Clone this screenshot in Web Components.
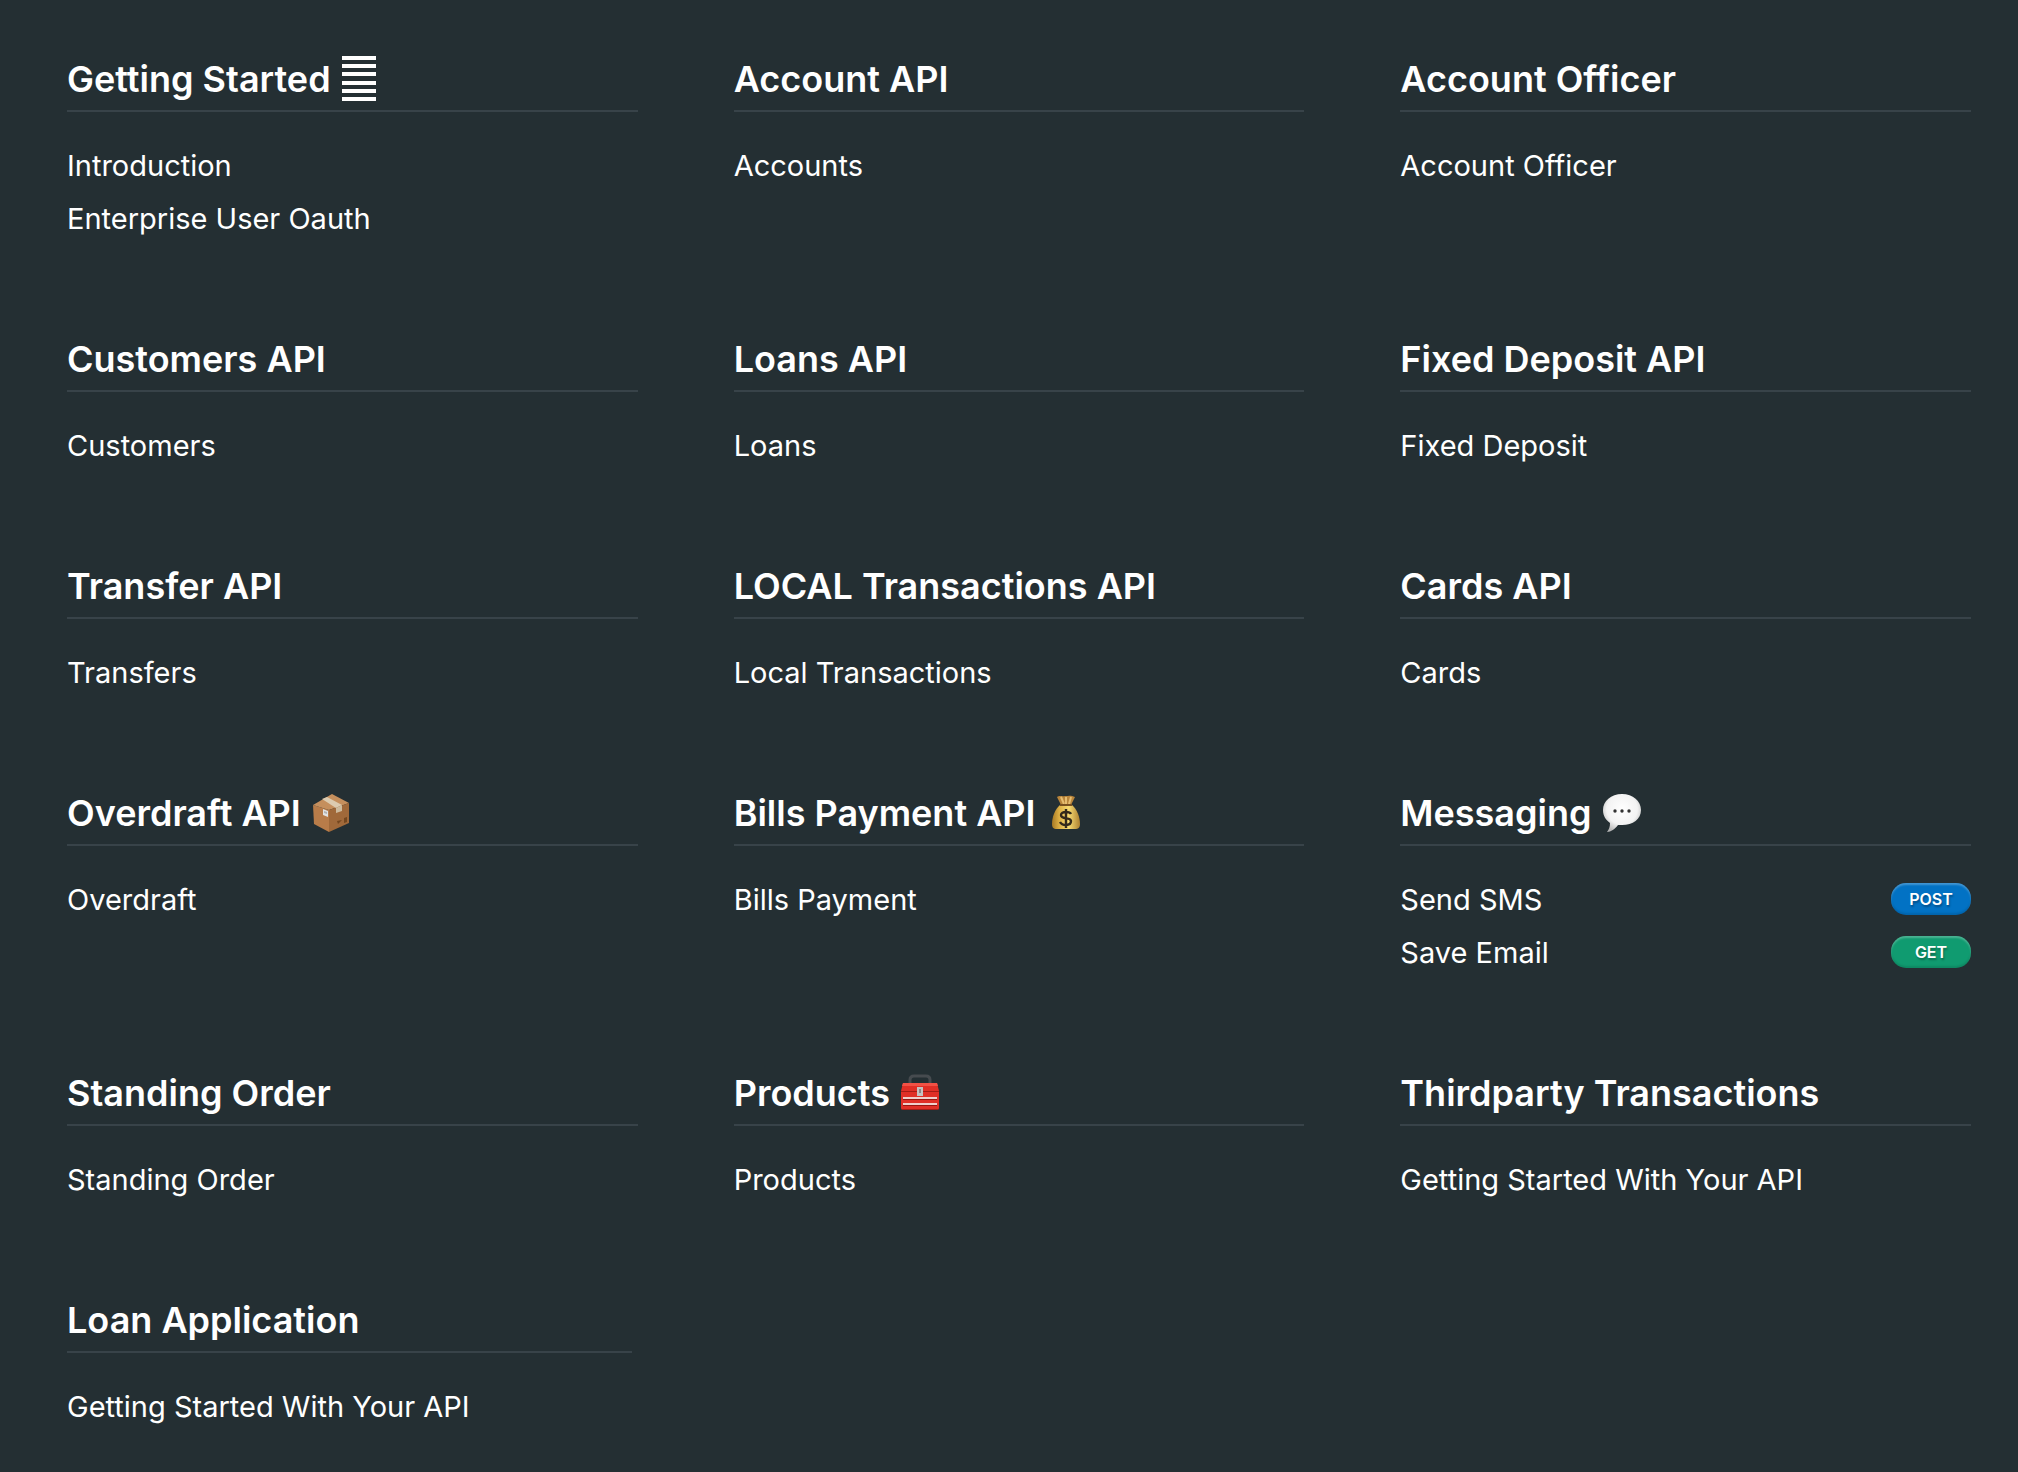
<!DOCTYPE html>
<html lang="en">
<head>
<meta charset="utf-8">
<meta name="viewport" content="width=device-width, initial-scale=1">
<title>API Reference</title>
<style>
  body { margin: 0; background: #242f33; color: #fff; font-family: Inter, "Noto Sans", sans-serif; }
</style>
</head>
<body>
<api-index>
  <api-section heading="Getting Started">
    <emoji-icon slot="icon" name="lines"></emoji-icon>
    <api-link>Introduction</api-link>
    <api-link>Enterprise User Oauth</api-link>
  </api-section>
  <api-section heading="Account API"><api-link>Accounts</api-link></api-section>
  <api-section heading="Account Officer"><api-link>Account Officer</api-link></api-section>
  <api-section heading="Customers API"><api-link>Customers</api-link></api-section>
  <api-section heading="Loans API"><api-link>Loans</api-link></api-section>
  <api-section heading="Fixed Deposit API"><api-link>Fixed Deposit</api-link></api-section>
  <api-section heading="Transfer API"><api-link>Transfers</api-link></api-section>
  <api-section heading="LOCAL Transactions API"><api-link>Local Transactions</api-link></api-section>
  <api-section heading="Cards API"><api-link>Cards</api-link></api-section>
  <api-section heading="Overdraft API">
    <emoji-icon slot="icon" name="package"></emoji-icon>
    <api-link>Overdraft</api-link>
  </api-section>
  <api-section heading="Bills Payment API">
    <emoji-icon slot="icon" name="money"></emoji-icon>
    <api-link>Bills Payment</api-link>
  </api-section>
  <api-section heading="Messaging">
    <emoji-icon slot="icon" name="speech"></emoji-icon>
    <api-link method="POST">Send SMS</api-link>
    <api-link method="GET">Save Email</api-link>
  </api-section>
  <api-section heading="Standing Order"><api-link>Standing Order</api-link></api-section>
  <api-section heading="Products">
    <emoji-icon slot="icon" name="toolbox"></emoji-icon>
    <api-link>Products</api-link>
  </api-section>
  <api-section heading="Thirdparty Transactions"><api-link>Getting Started With Your API</api-link></api-section>
  <api-section heading="Loan Application" narrow><api-link>Getting Started With Your API</api-link></api-section>
</api-index>

<script>
const icons = {
  lines: `<svg width="34" height="46" viewBox="0 0 34 46" fill="#fff"><path d="M0 0h34v4H0zM0 8h34v4H0zM0 16h34v4H0zM0 25h34v4H0zM0 33h34v4H0zM0 41h34v4H0z"/></svg>`,
  package: `<svg width="38" height="38" viewBox="0 0 38 38">
    <path d="M1 11 17 16v22L2 30z" fill="#b87c49"/>
    <path d="M1 11 20 0l17 9-20 7z" fill="#c58f5d"/>
    <path d="M17 16 37 9v20L17 38z" fill="#a0693a"/>
    <path d="m10 5 5-2 15 8-6 3z" fill="#dccbb0"/>
    <path d="m24 14 6-3v6l-6 2z" fill="#cdbb9e"/>
    <path d="m11 15 5 2v6l-5-2z" fill="#e2e2e2"/><path d="m12 17 3 1v2l-3-1z" fill="#b3b3b3"/>
    <path d="m25 27 5-1-4 4zM32 24l3-1v5l-3 1z" fill="#74471f"/></svg>`,
  money: `<svg width="38" height="38" viewBox="0 0 38 38">
    <defs><linearGradient id="g"><stop stop-color="#a77925"/><stop offset=".25" stop-color="#dcae43"/><stop offset=".6" stop-color="#f7db72"/><stop offset="1" stop-color="#ad8030"/></linearGradient></defs>
    <path d="M10 3c3-2 5 0 8-1 3 0 6-1 10 1l-4 8H14z" fill="#b9853b"/>
    <path d="m14 3 3 7M19 3v7M24 3l-2 7" stroke="#e6bd70" stroke-width="2"/>
    <path d="M13 11h12c5 4 8 12 8 19 0 4-2 5-5 5H10c-4 0-5-2-5-5 0-7 3-15 8-19z" fill="url(#g)"/>
    <path d="M13 11h12" stroke="#78501f" stroke-width="2"/>
    <path d="M24 20c-1-2-3-2-5-2-3 0-5 1-5 3 0 5 10 2 10 6 0 3-2 4-5 4s-5-1-6-3M19 15v19" fill="none" stroke="#33291b" stroke-width="2.4"/></svg>`,
  speech: `<svg width="38" height="38" viewBox="0 0 38 38">
    <defs><radialGradient id="s" cx=".5" cy=".4" r=".62"><stop stop-color="#fff"/><stop offset=".65" stop-color="#f3f3f3"/><stop offset="1" stop-color="#b5b5b5"/></radialGradient></defs>
    <path d="M19 0c11 0 19 7 19 16s-8 15-19 15h-4c-3 4-7 7-11 7 2-3 3-5 3-9C3 26 0 22 0 16 0 7 8 0 19 0z" fill="url(#s)"/>
    <circle cx="12" cy="17" r="1.7" fill="#333"/><circle cx="19" cy="17" r="1.7" fill="#333"/><circle cx="26" cy="17" r="1.7" fill="#333"/></svg>`,
  toolbox: `<svg width="38" height="38" viewBox="0 0 38 38">
    <path d="M9 10V6c0-3 2-4 4-4h12c2 0 4 1 4 4v4" fill="none" stroke="#464b4f" stroke-width="3"/>
    <path d="M2 9h34l2 8v17c0 1-1 2-2 2H2c-1 0-2-1-2-2V17z" fill="#e02f26"/>
    <path d="M2 9h34l1 3H1z" fill="#f25145"/><path d="M0 17h38v1H0zM1 35h36v1H1z" fill="#a31c16"/>
    <path d="M2 23h34v2H2zM2 29h34v2H2z" fill="#efcfcb"/><path d="M2 25h34v1H2zM2 31h34v1H2z" fill="#971712"/>
    <path d="M16 13h6v9h-6z" fill="#c4c2c2"/><path d="M18 15h2v4h-2z" fill="#8a8686"/></svg>`
};

customElements.define('emoji-icon', class extends HTMLElement {
  connectedCallback() {
    this.attachShadow({ mode: 'open' }).innerHTML = `
      <style>:host { display: flex; } svg { display: block; }</style>${icons[this.getAttribute('name')]}`;
  }
});

customElements.define('api-index', class extends HTMLElement {
  connectedCallback() {
    this.attachShadow({ mode: 'open' }).innerHTML = `
      <style>
        :host { display: block; }
        main { display: grid; grid-template-columns: repeat(3, minmax(0, 1fr)); gap: 92px 96px; padding: 57px 47px 26px 67px; }
      </style>
      <main><slot></slot></main>`;
  }
});

customElements.define('api-section', class extends HTMLElement {
  connectedCallback() {
    this.attachShadow({ mode: 'open' }).innerHTML = `
      <style>
        :host { display: block; }
        :host([narrow]) { margin-right: 6px; }
        header { display: flex; align-items: center; gap: 11px; height: 44px; padding-bottom: 9px; border-bottom: 2px solid #384349; }
        h2 { margin: 0; font-size: 36px; line-height: 44px; font-weight: 600; white-space: nowrap; }
        nav { display: flex; flex-direction: column; margin-top: 27px; }
      </style>
      <header><h2></h2><slot name="icon"></slot></header>
      <nav><slot></slot></nav>`;
    this.shadowRoot.querySelector('h2').textContent = this.getAttribute('heading');
  }
});

customElements.define('api-link', class extends HTMLElement {
  connectedCallback() {
    const method = this.getAttribute('method');
    this.attachShadow({ mode: 'open' }).innerHTML = `
      <style>
        :host { display: block; }
        a { display: flex; align-items: center; justify-content: space-between; height: 53px; color: #fff; text-decoration: none; font-size: 29px; line-height: 53px; white-space: nowrap; }
        .badge { width: 80px; height: 32px; margin-bottom: 2px; border-radius: 15px; text-align: center; font-size: 16px; line-height: 32px; font-weight: 600; text-shadow: 1px 2px 2px rgba(0,0,0,.3); box-shadow: inset 0 2px 2px rgba(255,255,255,.25), inset 0 -2px 2px rgba(0,0,0,.12); }
        .POST { background: #0272c4; }
        .GET { background: #109b70; }
      </style>
      <a href="#"><span><slot></slot></span>${method ? `<span class="badge ${method}">${method}</span>` : ''}</a>`;
  }
});
</script>
</body>
</html>
